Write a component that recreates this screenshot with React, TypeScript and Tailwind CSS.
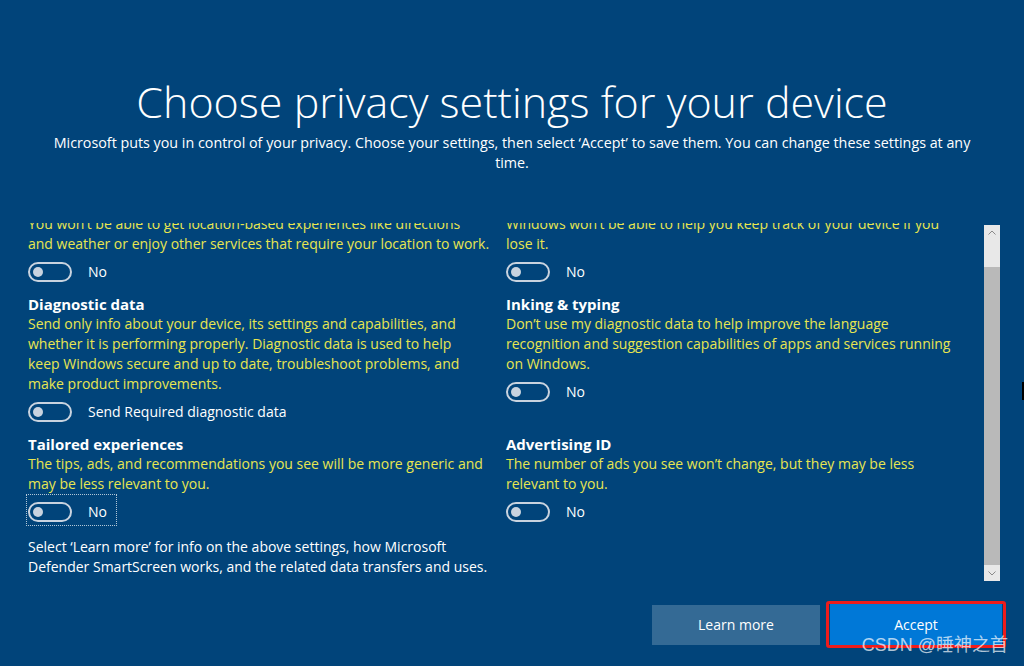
import type { ReactNode } from "react"

const FONT = { fontFamily: '"Segoe UI", "Open Sans", "Noto Sans", sans-serif' }

function Toggle({ label, focused = false }: { label: string; focused?: boolean }) {
  return (
    <div
      className={`-ml-[2px] inline-flex h-[32px] items-end pb-[4px] pl-[2px] pr-[10px] ${
        focused ? "outline-1 outline-offset-[-1px] outline-dotted outline-white/70" : ""
      }`}
    >
      <div className="flex items-center">
        <div className="flex h-[20px] w-[44px] items-center rounded-full border-2 border-[#c9d3df]">
          <div className="ml-[3px] h-[10px] w-[10px] rounded-full bg-[#c9d3df]" />
        </div>
        <span className="ml-[16px] text-[14px] leading-5 text-white">{label}</span>
      </div>
    </div>
  )
}

function Setting({ title, children, toggle, focused }: { title?: string; children: ReactNode; toggle: string; focused?: boolean }) {
  return (
    <div className="flex flex-col items-start">
      {title && <div className="text-[15px] font-bold leading-5 text-white">{title}</div>}
      <p className="text-[14px] leading-5 text-[#e8e650]">{children}</p>
      <Toggle label={toggle} focused={focused} />
    </div>
  )
}

function Chevron({ up }: { up?: boolean }) {
  return (
    <svg width="16" height="16" viewBox="0 0 16 16" className="shrink-0">
      <path d={up ? "M4.5 9.5 L8 6 L11.5 9.5" : "M4.5 6.5 L8 10 L11.5 6.5"} fill="none" stroke="#8a8a8a" strokeWidth="1" />
    </svg>
  )
}

export default function App() {
  return (
    <div style={FONT} className="relative flex h-[666px] w-[1024px] flex-col overflow-hidden bg-[#01447a]">
      {/* header */}
      <div className="flex flex-col items-center pt-[74px]">
        <h1 className="text-[43px] font-light leading-[56px] text-white">Choose privacy settings for your device</h1>
        <p className="mt-[3px] w-[940px] text-center text-[14.3px] leading-5 text-white">
          Microsoft puts you in control of your privacy. Choose your settings, then select ‘Accept’ to save them. You can change these settings at any time.
        </p>
      </div>

      {/* scrolling settings list */}
      <div className="mt-[50px] flex h-[358px]">
        <div className="flex-1 overflow-hidden pl-[28px]">
          <div className="-mt-[9px] grid grid-cols-[458px_458px] gap-x-[20px] gap-y-2">
            <Setting toggle="No">
              <span className="whitespace-nowrap">You won’t be able to get location-based experiences like directions</span>
              <br />
              <span className="whitespace-nowrap">and weather or enjoy other services that require your location to work.</span>
            </Setting>
            <Setting toggle="No">Windows won’t be able to help you keep track of your device if you lose it.</Setting>
            <Setting title="Diagnostic data" toggle="Send Required diagnostic data">
              Send only info about your device, its settings and capabilities, and whether it is performing properly. Diagnostic data is used to help keep Windows secure and up to date, troubleshoot problems, and make product improvements.
            </Setting>
            <Setting title="Inking & typing" toggle="No">
              Don’t use my diagnostic data to help improve the language recognition and suggestion capabilities of apps and services running on Windows.
            </Setting>
            <Setting title="Tailored experiences" toggle="No" focused>
              The tips, ads, and recommendations you see will be more generic and may be less relevant to you.
            </Setting>
            <Setting title="Advertising ID" toggle="No">
              The number of ads you see won’t change, but they may be less relevant to you.
            </Setting>
            <p className="mt-[3px] text-[14px] leading-5 text-white">
              <span className="whitespace-nowrap">Select ‘Learn more’ for info on the above settings, how Microsoft</span>
              <br />
              <span className="whitespace-nowrap">Defender SmartScreen works, and the related data transfers and uses.</span>
            </p>
          </div>
        </div>
        {/* scrollbar */}
        <div className="mr-[24px] mt-[2px] flex w-[16px] flex-col bg-[#e8e8e8]">
          <Chevron up />
          <div className="mt-[26px] flex-1 bg-[#b9b9b9]" />
          <Chevron />
        </div>
      </div>

      {/* buttons */}
      <div className="mt-[20px] flex items-center justify-end pr-[18px]">
        <button className="h-[40px] w-[168px] bg-[#346a95] text-[14px] text-white">Learn more</button>
        <div className="ml-[6px] rounded-[3px] border-[3px] border-[#ee1c1c] px-[1px]">
          <button className="block h-[41px] w-[172px] bg-[#0078d7] text-[14px] text-white">Accept</button>
        </div>
      </div>

      {/* cursor mark at right edge */}
      <div className="absolute right-0 top-[382px] h-[18px] w-[2px] bg-black" />

      {/* watermark */}
      <div
        className="absolute right-[16px] top-[633px] text-[18px] leading-6 text-white/70"
        style={{ fontFamily: '"Liberation Sans", "Noto Sans CJK SC", sans-serif' }}
      >
        CSDN @睡神之首
      </div>
    </div>
  )
}
